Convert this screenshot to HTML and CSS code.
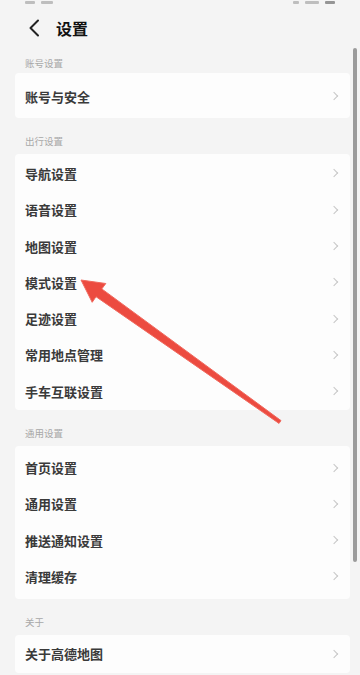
FILE: index.html
```html
<!DOCTYPE html>
<html lang="zh">
<head>
<meta charset="utf-8">
<title>设置</title>
<link rel="stylesheet" href="styles.css">
</head>
<body>
<div class="screen">
  <div class="status">
    <div class="status-left"><span class="frag w10"></span><span class="frag w12"></span></div>
    <div class="status-right"><span class="frag w6"></span><span class="frag w14"></span><span class="frag w10 dark"></span></div>
  </div>
  <header class="topbar">
    <svg class="back" width="12" height="18" viewBox="0 0 12 18"><path d="M10 1.5 L2.5 9 L10 16.5" fill="none" stroke="#222" stroke-width="2" stroke-linecap="round" stroke-linejoin="round"/></svg>
    <h1 class="title">设置</h1>
  </header>

  <div class="section-label first">账号设置</div>
  <div class="card pad-a">
    <div class="row"><span>账号与安全</span><i class="chev"></i></div>
  </div>

  <div class="section-label">出行设置</div>
  <div class="card">
    <div class="row"><span>导航设置</span><i class="chev"></i></div>
    <div class="row"><span>语音设置</span><i class="chev"></i></div>
    <div class="row"><span>地图设置</span><i class="chev"></i></div>
    <div class="row"><span>模式设置</span><i class="chev"></i></div>
    <div class="row"><span>足迹设置</span><i class="chev"></i></div>
    <div class="row"><span>常用地点管理</span><i class="chev"></i></div>
    <div class="row"><span>手车互联设置</span><i class="chev"></i></div>
  </div>

  <div class="section-label">通用设置</div>
  <div class="card pad-c">
    <div class="row"><span>首页设置</span><i class="chev"></i></div>
    <div class="row"><span>通用设置</span><i class="chev"></i></div>
    <div class="row"><span>推送通知设置</span><i class="chev"></i></div>
    <div class="row"><span>清理缓存</span><i class="chev"></i></div>
  </div>

  <div class="section-label">关于</div>
  <div class="card">
    <div class="row"><span>关于高德地图</span><i class="chev"></i></div>
  </div>

  <div class="scrollbar"></div>
  <svg class="arrow" width="360" height="675" viewBox="0 0 360 675">
    <polygon points="81,280 105.8,283.5 101.8,288.9 281,420.6 279,423.4 96,296.7 92.2,302.3" fill="#ec4b40" stroke="#f06a5f" stroke-width="1" stroke-linejoin="round"/>
  </svg>
</div>
</body>
</html>
```
FILE: styles.css
```css
* { box-sizing: border-box; margin: 0; padding: 0; }
html, body { width: 360px; height: 675px; overflow: hidden; }
body {
  background: #f4f4f4;
  font-family: "Noto Sans CJK SC", "Noto Sans", sans-serif;
  color: #333;
}
.screen { position: relative; width: 360px; height: 675px; overflow: hidden; padding: 0 10px 0 15px; }
.status { height: 6px; display: flex; justify-content: space-between; padding: 1px 15px 0 10px; }
.status-left, .status-right { display: flex; gap: 6px; align-items: flex-start; }
.frag { display: block; height: 3px; background: #9a9a9a; border-radius: 1px; opacity: .6; }
.frag.dark { background: #555; }
.w6 { width: 6px; } .w10 { width: 10px; } .w12 { width: 12px; } .w14 { width: 14px; }
.topbar { height: 48px; display: flex; align-items: center; padding-left: 13px; padding-bottom: 4px; }
.back { display: block; margin-right: 16px; }
.title { font-size: 16px; font-weight: 700; color: #111; line-height: 1; }
.section-label {
  font-size: 9.5px; color: #a8a8a8; line-height: 10px;
  padding: 18px 0 8px 10px;
}
.section-label.first { padding-top: 4px; padding-bottom: 5px; }
.card { background: #fdfdfd; border-radius: 4px; padding: 1px 0; }
.card.pad-a { padding: 5px 0 4px; }
.card.pad-c { padding: 3px 0 4px; }
.row {
  height: 36.3px; display: flex; align-items: center; justify-content: space-between;
  padding: 0 13px 0 10px; font-size: 13px; font-weight: 700; color: #3a3a3a;
}
.chev {
  display: block; width: 6px; height: 6px;
  border-top: 1.3px solid #c6c6c6; border-right: 1.3px solid #c6c6c6;
  transform: rotate(45deg);
}
.scrollbar {
  position: absolute; left: 353px; top: 48px; width: 4px; height: 514px;
  background: #9b9b9b; border-radius: 2px;
}
.arrow { position: absolute; left: 0; top: 0; pointer-events: none; }
```
